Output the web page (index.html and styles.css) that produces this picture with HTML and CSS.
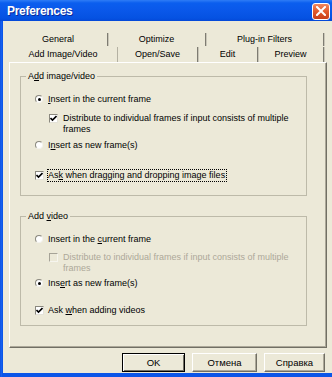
FILE: index.html
```html
<!DOCTYPE html>
<html>
<head>
<meta charset="utf-8">
<link rel="stylesheet" href="styles.css">
</head>
<body>
<div class="frame">
  <div class="titlebar">
    <span class="title">Preferences</span>
    <span class="close"><svg width="10" height="10" viewBox="0 0 10 10"><path d="M1 1 L9 9 M9 1 L1 9" stroke="#fff" stroke-width="2" stroke-linecap="square"/></svg></span>
  </div>
  <div class="client">
    <div class="tabs">
      <div class="tabrow back">
        <div class="tab w98">General</div>
        <div class="tab w97">Optimize</div>
        <div class="tab w117">Plug-in Filters</div>
      </div>
      <div class="tabrow front">
        <div class="tab sel w108">Add Image/Video</div>
        <div class="tab w79">Open/Save</div>
        <div class="tab w59">Edit</div>
        <div class="tab w65">Preview</div>
      </div>
    </div>
    <div class="panel">
      <fieldset class="group g1">
        <legend>A<u>d</u>d image/video</legend>
        <div class="opt first">
          <span class="rb on"></span><span class="lbl"><u>I</u>nsert in the current frame</span>
        </div>
        <div class="opt sub c1">
          <span class="cb"><svg width="7" height="7" viewBox="0 0 7 7"><path d="M0.5 3 L2.5 5 L6.5 1" stroke="#000" stroke-width="1.6" fill="none"/></svg></span>
          <span class="lbl">Distribute to individual frames if input consists of multiple frames</span>
        </div>
        <div class="opt r2a">
          <span class="rb"></span><span class="lbl">I<u>n</u>sert as new frame(s)</span>
        </div>
        <div class="opt aska">
          <span class="cb ask"><svg width="7" height="7" viewBox="0 0 7 7"><path d="M0.5 3 L2.5 5 L6.5 1" stroke="#000" stroke-width="1.6" fill="none"/></svg></span>
          <span class="lbl focus">As<u>k</u> when dragging and dropping image files</span>
        </div>
      </fieldset>
      <fieldset class="group g2">
        <legend>Add <u>v</u>ideo</legend>
        <div class="opt first">
          <span class="rb"></span><span class="lbl">Insert in the <u>c</u>urrent frame</span>
        </div>
        <div class="opt sub c2 disabled">
          <span class="cb off"></span>
          <span class="lbl">Distribute to individual frames if input consists of multiple frames</span>
        </div>
        <div class="opt r2b">
          <span class="rb on"></span><span class="lbl">Ins<u>e</u>rt as new frame(s)</span>
        </div>
        <div class="opt askb">
          <span class="cb ask"><svg width="7" height="7" viewBox="0 0 7 7"><path d="M0.5 3 L2.5 5 L6.5 1" stroke="#000" stroke-width="1.6" fill="none"/></svg></span>
          <span class="lbl">Ask <u>w</u>hen adding videos</span>
        </div>
      </fieldset>
    </div>
    <div class="buttons">
      <div class="btn def bw63">OK</div>
      <div class="btn bw65">Отмена</div>
      <div class="btn bw61">Справка</div>
    </div>
  </div>
</div>
</body>
</html>
```
FILE: styles.css
```css
html, body {
  margin: 0;
  padding: 0;
}
body {
  width: 332px;
  height: 377px;
  overflow: hidden;
  font-family: "Liberation Sans", Arial, sans-serif;
  font-size: 9px;
  color: #000;
}
.frame {
  width: 332px;
  height: 377px;
  display: flex;
  flex-direction: column;
  background: linear-gradient(90deg, #0842D4 0, #1C6AF6 1px, #0B55E8 2px, #0B55E8 100%);
  box-sizing: border-box;
}
.titlebar {
  height: 21px;
  flex: none;
  display: flex;
  align-items: center;
  justify-content: space-between;
  background: linear-gradient(180deg, #2E7CF6 0, #0B5EEE 3px, #0A58EA 10px, #0552E2 18px, #0448D8 21px);
  padding: 0 2px 0 7px;
}
.title {
  color: #fff;
  font-weight: bold;
  font-size: 12px;
  letter-spacing: -0.3px;
  text-shadow: 1px 1px 0 #0A2A9A;
  line-height: 14px;
  margin-top: 1px;
}
.close {
  width: 18px;
  height: 17px;
  box-sizing: border-box;
  border: 1px solid #fff;
  border-radius: 3px;
  background: linear-gradient(180deg, #F08860 0, #E25A2C 50%, #C8401A 100%);
  display: flex;
  align-items: center;
  justify-content: center;
  margin-top: 1px;
}
.client {
  flex: 1;
  margin: 0 0 4px 3px;
  background: #ECE9D8;
  display: flex;
  flex-direction: column;
  padding: 11px 5px 0 6px;
}
.tabs {
  display: flex;
  flex-direction: column;
}
.tabrow {
  display: flex;
  height: 15px;
}
.tab {
  box-sizing: border-box;
  display: flex;
  align-items: center;
  justify-content: center;
  border-right: 1px solid #7E7C72;
  box-shadow: 1px 0 0 #C9C6B8;
  line-height: 11px;
}
.back .tab {
  height: 13px;
  margin-top: 1px;
}
.front .tab {
  height: 15px;
}
.tab.sel {
  border-right-color: #B4B1A2;
  box-shadow: none;
}
.w98 { width: 99px; }
.w97 { width: 98px; }
.w117 { width: 118px; }
.w108 { width: 109px; }
.w79 { width: 80px; }
.w59 { width: 60px; }
.w65 { width: 66px; }
.panel {
  flex: 1;
  box-sizing: border-box;
  width: 318px;
  border-top: 1px solid #fff;
  border-left: 1px solid #fff;
  border-right: 1px solid #716F64;
  border-bottom: 1px solid #716F64;
  box-shadow: inset -1px -1px 0 #ACA899;
  display: flex;
  flex-direction: column;
}
.group {
  border: 1px solid #BDBAA9;
  margin: 7px 19px 0 10px;
  padding: 0 0 14px 5px;
  min-width: 0;
}
.g2 {
  margin-top: 14px;
  padding-bottom: 9px;
}
legend {
  padding: 0 2px;
  line-height: 12px;
  font-size: 9px;
}
.opt {
  display: flex;
  align-items: flex-start;
  line-height: 11px;
  margin-left: 9px;
}
.opt.first { margin-top: 12px; }
.opt.sub { margin-left: 23px; }
.c1 { margin-top: 8px; }
.c2 { margin-top: 7px; }
.r2a { margin-top: 5px; }
.r2b { margin-top: 4px; }
.aska { margin-top: 19px; }
.askb { margin-top: 16px; }
.lbl {
  flex: 1;
}
.sub .lbl {
  padding-right: 14px;
}
.rb {
  flex: none;
  width: 8px;
  height: 8px;
  box-sizing: border-box;
  border-radius: 50%;
  border: 1px solid;
  border-color: #8A887E #F4F3EE #F4F3EE #8A887E;
  background: #fff;
  margin: 1px 5px 0 0;
  display: flex;
  align-items: center;
  justify-content: center;
}
.rb.on::after {
  content: "";
  width: 3px;
  height: 3px;
  border-radius: 50%;
  background: #000;
}
.cb {
  flex: none;
  width: 9px;
  height: 9px;
  box-sizing: border-box;
  border: 1px solid;
  border-color: #8A887E #E4E2D8 #E4E2D8 #8A887E;
  background: #fff;
  margin: 1px 5px 0 0;
  display: flex;
  align-items: center;
  justify-content: center;
}
.cb.ask {
  margin-right: 4px;
}
.cb.off {
  background: #ECE9D8;
  border-color: #A6A397 #F6F5EE #F6F5EE #A6A397;
}
.disabled .lbl {
  color: #ACA899;
}
.focus {
  flex: none;
  outline: 1px dotted #000;
  outline-offset: 0;
  padding: 0 1px 0 0;
}
.buttons {
  display: flex;
  justify-content: flex-end;
  gap: 7px;
  margin: 5px 2px 1px 0;
  height: 19px;
}
.btn {
  box-sizing: border-box;
  height: 19px;
  display: flex;
  align-items: center;
  justify-content: center;
  font-size: 9.5px;
  border: 1px solid;
  border-color: #fff #716F64 #716F64 #fff;
  box-shadow: inset -1px -1px 0 #ACA899;
}
.btn.def {
  border-color: #000;
  box-shadow: inset 1px 1px 0 #fff, inset -1px -1px 0 #716F64;
}
.bw63 { width: 63px; }
.bw65 { width: 65px; }
.bw61 { width: 61px; }
```
